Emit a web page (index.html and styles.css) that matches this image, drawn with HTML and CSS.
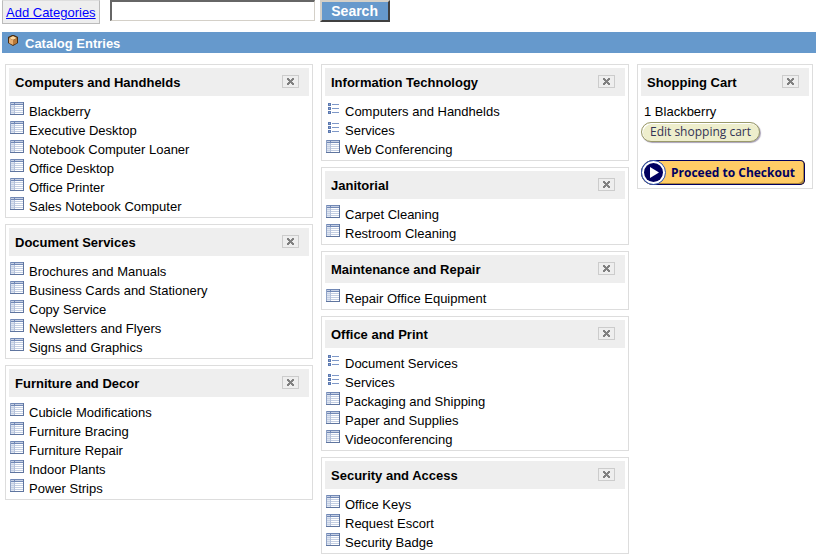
FILE: index.html
```html
<!DOCTYPE html>
<html lang="en">
<head>
<meta charset="utf-8">
<title>Catalog Entries</title>
<link rel="stylesheet" href="styles.css">
</head>
<body>
<svg class="sprite" aria-hidden="true">
  <symbol id="table" viewBox="0 0 14 13">
    <path fill="#fff" d="M0 0h14v13H0z"/>
    <path fill="#dfe6f2" d="M1 3h3v9H1z"/>
    <path fill="#7188b5" d="M0 0h14v3H0z"/>
    <path fill="#c6d0e4" d="M1 1h3v1H1zM5 1h8v1H5z"/>
    <path fill="#c3cee2" d="M1 4h12v1H1zM1 6h12v1H1zM1 8h12v1H1zM1 10h12v1H1z"/>
    <path fill="#b4c1da" d="M4 3h1v9H4z"/>
    <path fill="#8fa2c6" d="M0 0h1v13H0z"/>
    <path fill="#5f759f" d="M13 0h1v13H0v-1h13z"/>
  </symbol>
  <symbol id="list" viewBox="0 0 14 13">
    <path fill="#5b78b0" d="M2 1h3v3H2zM2 5h3v3H2zM2 9h3v3H2z"/>
    <path fill="#8fa6d0" d="M3 2h1v1H3zM3 6h1v1H3zM3 10h1v1H3z"/>
    <path fill="#7e98c8" d="M6 2h7v1H6zM6 6h7v1H6zM6 10h7v1H6z"/>
  </symbol>
  <symbol id="close" viewBox="0 0 7 7">
    <path fill="#808080" d="M0 0h2v1h1v1h1V1h1V0h2v2H6v1H5v1h1v1h1v2H5V6H4V5H3v1H2v1H0V5h1V4h1V3H1V2H0z"/>
  </symbol>
</svg>
<header class="toolbar">
  <a class="add" href="#">Add Categories</a>
  <form class="search">
    <input type="text" aria-label="Search catalog">
    <button type="submit">Search</button>
  </form>
</header>
<h1 class="title">
  <svg width="12" height="12" viewBox="0 0 12 12" aria-hidden="true">
    <path fill="#4a2c10" d="M5 0h2l4 2v6l-5 3-5-3V2z"/>
    <path fill="#ffd9a0" d="M6 1l4 2-4 2-4-2z"/>
    <path fill="#e8ae70" d="M2 3l4 2v5L2 8z"/>
    <path fill="#b87838" d="M10 3L6 5v5l4-2z"/>
  </svg>
  <span>Catalog Entries</span>
</h1>
<main class="columns">
  <div class="column">
    <section class="card">
      <div class="head"><h2>Computers and Handhelds</h2><button class="close" type="button" aria-label="Close"><svg><use href="#close"/></svg></button></div>
      <ul>
        <li><svg><use href="#table"/></svg>Blackberry</li>
        <li><svg><use href="#table"/></svg>Executive Desktop</li>
        <li><svg><use href="#table"/></svg>Notebook Computer Loaner</li>
        <li><svg><use href="#table"/></svg>Office Desktop</li>
        <li><svg><use href="#table"/></svg>Office Printer</li>
        <li><svg><use href="#table"/></svg>Sales Notebook Computer</li>
      </ul>
    </section>
    <section class="card">
      <div class="head"><h2>Document Services</h2><button class="close" type="button" aria-label="Close"><svg><use href="#close"/></svg></button></div>
      <ul>
        <li><svg><use href="#table"/></svg>Brochures and Manuals</li>
        <li><svg><use href="#table"/></svg>Business Cards and Stationery</li>
        <li><svg><use href="#table"/></svg>Copy Service</li>
        <li><svg><use href="#table"/></svg>Newsletters and Flyers</li>
        <li><svg><use href="#table"/></svg>Signs and Graphics</li>
      </ul>
    </section>
    <section class="card">
      <div class="head"><h2>Furniture and Decor</h2><button class="close" type="button" aria-label="Close"><svg><use href="#close"/></svg></button></div>
      <ul>
        <li><svg><use href="#table"/></svg>Cubicle Modifications</li>
        <li><svg><use href="#table"/></svg>Furniture Bracing</li>
        <li><svg><use href="#table"/></svg>Furniture Repair</li>
        <li><svg><use href="#table"/></svg>Indoor Plants</li>
        <li><svg><use href="#table"/></svg>Power Strips</li>
      </ul>
    </section>
  </div>
  <div class="column">
    <section class="card">
      <div class="head"><h2>Information Technology</h2><button class="close" type="button" aria-label="Close"><svg><use href="#close"/></svg></button></div>
      <ul>
        <li><svg><use href="#list"/></svg>Computers and Handhelds</li>
        <li><svg><use href="#list"/></svg>Services</li>
        <li><svg><use href="#table"/></svg>Web Conferencing</li>
      </ul>
    </section>
    <section class="card">
      <div class="head"><h2>Janitorial</h2><button class="close" type="button" aria-label="Close"><svg><use href="#close"/></svg></button></div>
      <ul>
        <li><svg><use href="#table"/></svg>Carpet Cleaning</li>
        <li><svg><use href="#table"/></svg>Restroom Cleaning</li>
      </ul>
    </section>
    <section class="card">
      <div class="head"><h2>Maintenance and Repair</h2><button class="close" type="button" aria-label="Close"><svg><use href="#close"/></svg></button></div>
      <ul>
        <li><svg><use href="#table"/></svg>Repair Office Equipment</li>
      </ul>
    </section>
    <section class="card">
      <div class="head"><h2>Office and Print</h2><button class="close" type="button" aria-label="Close"><svg><use href="#close"/></svg></button></div>
      <ul>
        <li><svg><use href="#list"/></svg>Document Services</li>
        <li><svg><use href="#list"/></svg>Services</li>
        <li><svg><use href="#table"/></svg>Packaging and Shipping</li>
        <li><svg><use href="#table"/></svg>Paper and Supplies</li>
        <li><svg><use href="#table"/></svg>Videoconferencing</li>
      </ul>
    </section>
    <section class="card">
      <div class="head"><h2>Security and Access</h2><button class="close" type="button" aria-label="Close"><svg><use href="#close"/></svg></button></div>
      <ul>
        <li><svg><use href="#table"/></svg>Office Keys</li>
        <li><svg><use href="#table"/></svg>Request Escort</li>
        <li><svg><use href="#table"/></svg>Security Badge</li>
      </ul>
    </section>
  </div>
  <div class="column">
    <section class="card">
      <div class="head"><h2>Shopping Cart</h2><button class="close" type="button" aria-label="Close"><svg><use href="#close"/></svg></button></div>
      <div class="cart">
        <p>1 Blackberry</p>
        <button class="edit" type="button">Edit shopping cart</button>
        <button class="checkout" type="button">
          <svg width="25" height="25" viewBox="0 0 25 25" aria-hidden="true">
            <circle cx="12.5" cy="12.5" r="12" fill="#fff" stroke="#2a4fa8"/>
            <circle cx="12.5" cy="12.5" r="9.5" fill="#000060"/>
            <path fill="#fff" d="M9 7l9 5.5L9 18z"/>
          </svg>
          <span>Proceed to Checkout</span>
        </button>
      </div>
    </section>
  </div>
</main>
</body>
</html>
```
FILE: styles.css
```css
* { box-sizing: border-box; }

body {
  margin: 0;
  background: #fff;
  color: #000;
  font: 13px/19px "Liberation Sans", Arial, sans-serif;
}

h1, h2, p, ul { margin: 0; padding: 0; }
button { padding: 0; cursor: pointer; }
.sprite { display: none; }

.toolbar {
  display: flex;
  align-items: flex-start;
  gap: 10px;
  height: 24px;
  padding-left: 2px;
}

.add {
  padding: 2px 3px 1px;
  border: 1px solid #bbb;
  border-top-color: #ddd;
  background: #eee;
  color: #00f;
  white-space: nowrap;
}

.search { display: flex; gap: 5px; }

.search input {
  width: 205px;
  height: 21px;
  border: 1px solid #d4d0c8;
  border-top: 2px solid #666;
  border-left: 2px solid #666;
  font: inherit;
}

.search button {
  width: 70px;
  height: 22px;
  border: 2px solid;
  border-color: #d4d0c8 #404040 #404040 #d4d0c8;
  background: #6699cc;
  color: #fff;
  font: bold 14px/18px "Liberation Sans", Arial, sans-serif;
}

.title {
  display: flex;
  gap: 6px;
  height: 21px;
  margin: 8px 1px 11px 2px;
  padding: 3px 5px 0;
  background: #6699cc;
  color: #fff;
  font: bold 13px/17px "Liberation Sans", Arial, sans-serif;
}

.columns {
  display: grid;
  grid-template-columns: 308fr 308fr 176fr;
  gap: 8px;
  align-items: start;
  padding: 0 4px 0 5px;
}

.column { display: grid; gap: 6px; }

.card {
  padding: 3px 3px 0;
  border: 1px solid #ddd;
}

.head {
  display: flex;
  align-items: flex-start;
  justify-content: space-between;
  height: 28px;
  padding: 0 10px 0 6px;
  background: #eee;
}

h2 { font-size: 13px; line-height: 29px; }

.close {
  display: grid;
  place-items: center;
  width: 17px;
  height: 13px;
  margin-top: 7px;
  border: 1px solid #ccc;
  background: #eee;
}

.close svg { width: 7px; height: 7px; }

.card ul { padding: 6px 1px 1px; list-style: none; }

.card li { display: flex; gap: 5px; height: 19px; }
.card li svg { width: 14px; height: 13px; flex: none; }

.cart { padding: 6px 0 3px; }
.cart p { padding-left: 3px; }

.edit {
  display: block;
  width: 119px;
  height: 20px;
  margin-top: 1px;
  border: 1px solid #99996a;
  border-radius: 10px;
  background: #eeeecc;
  box-shadow: inset 1px 1px #fff, 1px 1px 1px #a9a2b8;
  color: #333355;
  font: 12px/18px "Open Sans", sans-serif;
}

.checkout {
  display: flex;
  align-items: center;
  gap: 5px;
  width: 100%;
  max-width: 164px;
  height: 25px;
  margin-top: 18px;
  border: 0;
  border-radius: 13px 5px 5px 13px;
  background: #ffcc66;
  box-shadow: inset 0 0 0 1px #000060, inset -2px -2px #b08838;
  color: #000060;
  font: bold 12px/23px "Open Sans", sans-serif;
  white-space: nowrap;
}
```
